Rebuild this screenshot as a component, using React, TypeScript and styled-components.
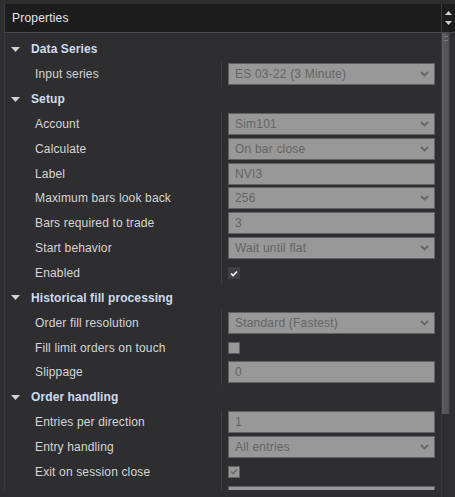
import React from "react";
import styled, { createGlobalStyle } from "styled-components";

const GlobalStyle = createGlobalStyle`
  html, body {
    margin: 0;
    padding: 0;
    background: #2e2e31;
  }
  body {
    font-family: "Liberation Sans", Arial, sans-serif;
    font-size: 12px;
  }
`;

const Window = styled.div`
  width: 455px;
  height: 497px;
  background: #2e2e31;
  display: flex;
  flex-direction: column;
  overflow: hidden;
  padding-top: 4px;
  box-sizing: border-box;
`;

const Header = styled.div`
  display: flex;
  height: 28px;
  margin-left: 4px;
  background: #1d1d1e;
  border-bottom: 1px solid #4a4a4c;
`;

const Title = styled.div`
  flex: 1;
  display: flex;
  align-items: center;
  padding-left: 7px;
  color: #e6e6e6;
  font-size: 12px;
  letter-spacing: 0.2px;
  border-left: 1px solid #3e3e40;
`;

const ScrollButtons = styled.div`
  width: 13px;
  border-left: 1px solid #3a3a3c;
  display: flex;
  flex-direction: column;
  align-items: center;
  justify-content: space-around;
  padding: 4px 0;
`;

const Body = styled.div`
  flex: 1;
  display: flex;
  min-height: 0;
`;

const Viewport = styled.div`
  flex: 1;
  margin-left: 4px;
  height: 457px;
  box-sizing: border-box;
  overflow: hidden;
  border-left: 1px solid #3a3a3d;
  padding-top: 4px;
`;

const ROW = 24.85;

const CategoryRow = styled.div`
  height: ${ROW}px;
  display: flex;
  align-items: center;
  padding-left: 6px;
  gap: 11px;
  color: #cddcf0;
  font-weight: bold;
  font-size: 12px;
  letter-spacing: 0.1px;
`;

const Row = styled.div`
  height: ${ROW}px;
  display: grid;
  grid-template-columns: 217px 1fr;
`;

const Name = styled.div`
  display: flex;
  align-items: center;
  padding-left: 30px;
  color: #d6d6d6;
  letter-spacing: 0.15px;
  border-right: 1px solid #3f3f42;
  white-space: nowrap;
  overflow: hidden;
`;

const ValueCell = styled.div`
  display: flex;
  align-items: center;
  padding: 0 6px;
`;

const Field = styled.div`
  flex: 1;
  height: 22px;
  box-sizing: border-box;
  background: #989898;
  border: 1px solid #616163;
  display: flex;
  align-items: center;
  justify-content: space-between;
  padding: 0 5px 0 6px;
  color: #646464;
  font-size: 12px;
  letter-spacing: 0.2px;
  white-space: nowrap;
`;

const Check = styled.div<{ $dark?: boolean }>`
  width: 12px;
  height: 12px;
  box-sizing: border-box;
  background: ${({ $dark }) => ($dark ? "#414145" : "#989898")};
  border: 1px solid ${({ $dark }) => ($dark ? "#414145" : "#616163")};
  display: flex;
  align-items: center;
  justify-content: center;
`;

const Scrollbar = styled.div`
  width: 13px;
  border-left: 1px solid #3a3a3c;
  background: #2f2f31;
`;

const Thumb = styled.div`
  width: 8px;
  height: 381px;
  background: linear-gradient(to right, #5e5e60, #4f4f51);
  border-right: 1px solid #3a3a3c;
  display: flex;
  flex-direction: column;
  align-items: stretch;
  gap: 3px;
  padding-top: 3px;
  box-sizing: border-box;
`;

const Grip = styled.div`
  height: 1px;
  margin: 0 1px 0 2px;
  background: #7a7a7c;
`;

const Triangle = ({ up }: { up?: boolean }) => (
  <svg width="7" height="4" viewBox="0 0 7 4">
    <polygon points={up ? "0,4 7,4 3.5,0" : "0,0 7,0 3.5,4"} fill="#d0d0d0" />
  </svg>
);

const Expander = () => (
  <svg width="9" height="5" viewBox="0 0 9 5">
    <polygon points="0,0 9,0 4.5,5" fill="#d2d2d2" />
  </svg>
);

const Chevron = () => (
  <svg width="9" height="6" viewBox="0 0 9 6">
    <polyline points="1,1 4.5,4.5 8,1" fill="none" stroke="#666" strokeWidth="1.8" />
  </svg>
);

const Tick = ({ color }: { color: string }) => (
  <svg width="8" height="7" viewBox="0 0 8 7">
    <polyline points="1,3.5 3,5.5 7,1.5" fill="none" stroke={color} strokeWidth="1.7" />
  </svg>
);

type Prop =
  | { kind: "cat"; label: string }
  | { kind: "select"; label: string; value: string }
  | { kind: "text"; label: string; value: string }
  | { kind: "check"; label: string; checked: boolean; dark?: boolean };

const props: Prop[] = [
  { kind: "cat", label: "Data Series" },
  { kind: "select", label: "Input series", value: "ES 03-22 (3 Minute)" },
  { kind: "cat", label: "Setup" },
  { kind: "select", label: "Account", value: "Sim101" },
  { kind: "select", label: "Calculate", value: "On bar close" },
  { kind: "text", label: "Label", value: "NVI3" },
  { kind: "select", label: "Maximum bars look back", value: "256" },
  { kind: "text", label: "Bars required to trade", value: "3" },
  { kind: "select", label: "Start behavior", value: "Wait until flat" },
  { kind: "check", label: "Enabled", checked: true, dark: true },
  { kind: "cat", label: "Historical fill processing" },
  { kind: "select", label: "Order fill resolution", value: "Standard (Fastest)" },
  { kind: "check", label: "Fill limit orders on touch", checked: false },
  { kind: "text", label: "Slippage", value: "0" },
  { kind: "cat", label: "Order handling" },
  { kind: "text", label: "Entries per direction", value: "1" },
  { kind: "select", label: "Entry handling", value: "All entries" },
  { kind: "check", label: "Exit on session close", checked: true },
  { kind: "text", label: "", value: "" },
];

export default function App() {
  return (
    <>
      <GlobalStyle />
      <Window>
        <Header>
          <Title>Properties</Title>
          <ScrollButtons>
            <Triangle up />
            <Triangle />
          </ScrollButtons>
        </Header>
        <Body>
          <Viewport>
            {props.map((p, i) => {
              if (p.kind === "cat") {
                return (
                  <CategoryRow key={i}>
                    <Expander />
                    {p.label}
                  </CategoryRow>
                );
              }
              return (
                <Row key={i}>
                  <Name>{p.label}</Name>
                  <ValueCell>
                    {p.kind === "check" ? (
                      <Check $dark={p.dark}>
                        {p.checked && <Tick color={p.dark ? "#f0f0f0" : "#6a6a6a"} />}
                      </Check>
                    ) : (
                      <Field>
                        <span>{p.value}</span>
                        {p.kind === "select" && <Chevron />}
                      </Field>
                    )}
                  </ValueCell>
                </Row>
              );
            })}
          </Viewport>
          <Scrollbar>
            <Thumb>
              <Grip />
              <Grip />
            </Thumb>
          </Scrollbar>
        </Body>
      </Window>
    </>
  );
}
